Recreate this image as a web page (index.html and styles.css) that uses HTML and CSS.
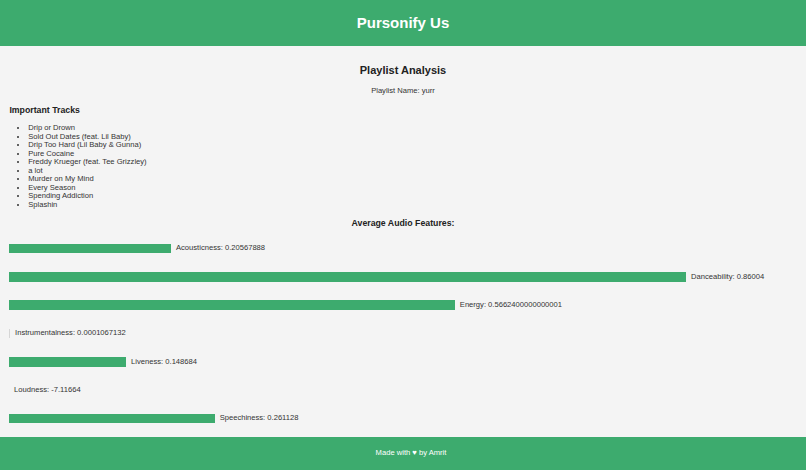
FILE: index.html
```html
<!DOCTYPE html>
<html lang="en">
<head>
<meta charset="utf-8">
<title>Pursonify Us</title>
<link rel="stylesheet" href="styles.css">
</head>
<body>
<header class="site-header">
  <h1 class="brand">Pursonify Us</h1>
</header>
<main class="content">
  <h2 class="page-title">Playlist Analysis</h2>
  <p class="playlist-name">Playlist Name: yurr</p>
  <h3 class="section-title">Important Tracks</h3>
  <ul class="track-list">
    <li>Drip or Drown</li>
    <li>Sold Out Dates (feat. Lil Baby)</li>
    <li>Drip Too Hard (Lil Baby &amp; Gunna)</li>
    <li>Pure Cocaine</li>
    <li>Freddy Krueger (feat. Tee Grizzley)</li>
    <li>a lot</li>
    <li>Murder on My Mind</li>
    <li>Every Season</li>
    <li>Spending Addiction</li>
    <li>Splashin</li>
  </ul>
  <h3 class="section-title centered">Average Audio Features:</h3>
  <div class="features">
    <div class="feature"><div class="bar" style="width: 20.567888%"></div><span class="label">Acousticness: 0.20567888</span></div>
    <div class="feature"><div class="bar" style="width: 86.004%"></div><span class="label">Danceability: 0.86004</span></div>
    <div class="feature"><div class="bar" style="width: 56.624%"></div><span class="label">Energy: 0.5662400000000001</span></div>
    <div class="feature"><div class="bar bar-tiny" style="width: 0.01067132%"></div><span class="label">Instrumentalness: 0.0001067132</span></div>
    <div class="feature"><div class="bar" style="width: 14.8684%"></div><span class="label">Liveness: 0.148684</span></div>
    <div class="feature"><div class="bar" style="width: 0%"></div><span class="label">Loudness: -7.11664</span></div>
    <div class="feature"><div class="bar" style="width: 26.1128%"></div><span class="label">Speechiness: 0.261128</span></div>
  </div>
</main>
<footer class="site-footer">
  <p class="credit">Made with &#9829; by Amrit</p>
</footer>
</body>
</html>
```

FILE: styles.css
```css
* { box-sizing: border-box; }

html, body {
  margin: 0;
  padding: 0;
}

body {
  min-height: 470px;
  display: flex;
  flex-direction: column;
  background: #f4f4f4;
  color: #333;
  font-family: "Liberation Sans", Arial, sans-serif;
  font-size: 7.6px;
  line-height: 8.5px;
}

.site-header {
  height: 46px;
  padding-bottom: 2px;
  background: #3dab6e;
  display: flex;
  align-items: center;
  justify-content: center;
}

.brand {
  margin: 0;
  color: #fff;
  font-size: 15px;
  line-height: 17px;
  font-weight: bold;
}

.content {
  flex: 1;
  padding: 0 9.4px;
}

.page-title {
  margin: 18.2px 0 0;
  text-align: center;
  font-size: 11px;
  line-height: 12.6px;
  color: #222;
}

.playlist-name {
  margin: 10.2px 0 0;
  text-align: center;
}

.section-title {
  margin: 9.2px 0 0;
  font-size: 8.75px;
  line-height: 10px;
  color: #222;
}

.section-title.centered {
  text-align: center;
  margin-top: 8.4px;
}

.track-list {
  margin: 9.6px 0 0;
  padding-left: 18.8px;
}

.features {
  margin-top: 16px;
  display: flex;
  flex-direction: column;
  gap: 18.75px;
}

.feature {
  display: flex;
  align-items: center;
  height: 9.6px;
}

.bar {
  flex-shrink: 0;
  height: 9.6px;
  background: #3dab6e;
}

.bar-tiny {
  min-width: 1px;
  background: #d6d6d6;
}

.label {
  margin-left: 4.7px;
  white-space: nowrap;
}

.site-footer {
  height: 33px;
  padding-left: 16px;
  background: #3dab6e;
  display: flex;
  align-items: center;
  justify-content: center;
}

.credit {
  margin: 0;
  color: #fff;
}
```
